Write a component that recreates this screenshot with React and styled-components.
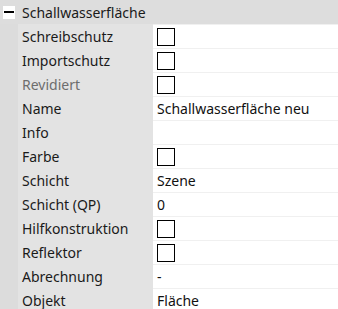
import React from 'react';
import styled, { createGlobalStyle } from 'styled-components';

const GlobalStyle = createGlobalStyle`
  body {
    margin: 0;
    background: #ffffff;
    font-family: "Noto Sans", "Open Sans", sans-serif;
  }
`;

const Grid = styled.div`
  width: 338px;
  height: 309px;
  overflow: hidden;
  font-size: 14px;
  color: #1a1a1a;
`;

const Header = styled.div`
  display: flex;
  align-items: center;
  height: 24px;
  background-color: #dddddd;
`;

const Toggle = styled.div`
  width: 12px;
  height: 13px;
  margin: 0 7px 0 3px;
  background-color: #fff;
  display: flex;
  align-items: center;
  justify-content: center;

  &::after {
    content: '';
    width: 10px;
    height: 2px;
    background: #000;
  }
`;

const Row = styled.div`
  display: grid;
  grid-template-columns: 18px 135px 1fr;
  height: 24px;
`;

const Gutter = styled.div`
  background-color: #dcdcdc;
`;

const Label = styled.div`
  background-color: #e3e3e3;
  display: flex;
  align-items: center;
  padding-left: 4px;
  color: ${(p) => (p.disabled ? '#6d6d6d' : '#1a1a1a')};
`;

const Value = styled.div`
  background-color: #fff;
  border-top: 1px solid #f0f0f0;
  display: flex;
  align-items: center;
  padding-left: 4px;
  color: #111;
`;

const Check = styled.div`
  width: 16px;
  height: 16px;
  border: 1px solid #000;
`;

const rows = [
  { label: 'Schreibschutz', check: true },
  { label: 'Importschutz', check: true },
  { label: 'Revidiert', check: true, disabled: true },
  { label: 'Name', value: 'Schallwasserfläche neu' },
  { label: 'Info', value: '' },
  { label: 'Farbe', check: true },
  { label: 'Schicht', value: 'Szene' },
  { label: 'Schicht (QP)', value: '0' },
  { label: 'Hilfkonstruktion', check: true },
  { label: 'Reflektor', check: true },
  { label: 'Abrechnung', value: '-' },
  { label: 'Objekt', value: 'Fläche' },
];

const App = () => (
  <>
    <GlobalStyle />
    <Grid>
      <Header>
        <Toggle />
        <span>Schallwasserfläche</span>
      </Header>
      {rows.map((r) => (
        <Row key={r.label}>
          <Gutter />
          <Label disabled={r.disabled}>{r.label}</Label>
          <Value>{r.check ? <Check /> : r.value}</Value>
        </Row>
      ))}
    </Grid>
  </>
);

export default App;
